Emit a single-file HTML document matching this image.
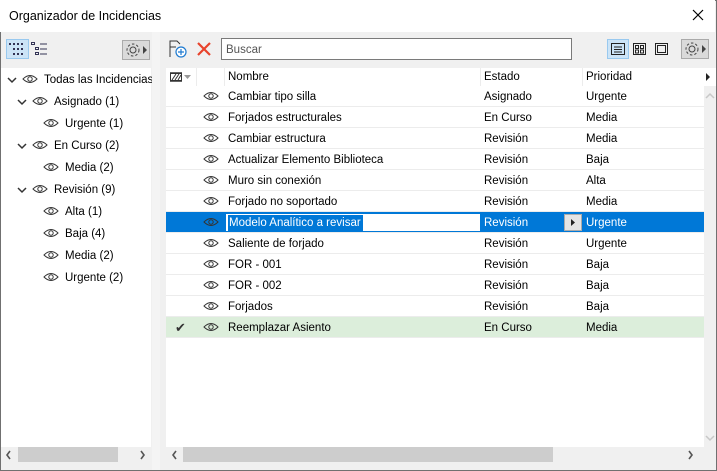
<!DOCTYPE html><html><head><meta charset="utf-8"><style>
*{box-sizing:border-box;margin:0;padding:0}
svg{display:block}
body{width:717px;height:471px;overflow:hidden;font-family:"Liberation Sans",sans-serif;font-size:11.5px;color:#000;background:#f0f0f0;position:relative}
.win{position:absolute;left:0;top:0;width:717px;height:471px;border:1px solid #707070;}
.abs{position:absolute}
.title{left:0;top:0;width:715px;height:32px;background:#fff;}
.title span{position:absolute;left:9px;top:9px;font-size:12.5px}
.tree{left:1px;top:68px;width:150px;height:379px;background:#fff}
.ti{position:absolute;height:22px;line-height:24px;white-space:nowrap}
.tbl{left:166px;top:68px;width:538px;height:379px;background:#fff}
.row{position:absolute;left:0;width:538px;height:21px;border-bottom:1px solid #ececec;line-height:22px}
.row span{position:absolute;top:0}
.eye{position:absolute;width:16px;height:10px}
.sb{background:#cdcdcd}
</style></head><body><div class="win"></div>
<div class="abs title"><span>Organizador de Incidencias</span>
<svg class="abs" style="left:692px;top:9px" width="12" height="12"><path d="M1 1L11 11M11 1L1 11" stroke="#000" stroke-width="1.2"/></svg></div>
<div class="abs" style="left:6px;top:39px;width:23px;height:20px;background:#cce4f7;border:1px solid #99c9ef"></div>
<svg class="abs" style="left:9px;top:43px" width="18" height="12"><g fill="#335"><rect x="0" y="0" width="2" height="2"/><rect x="4" y="0" width="2" height="2"/><rect x="8" y="0" width="2" height="2"/><rect x="12" y="0" width="2" height="2"/><rect x="4" y="5" width="2" height="2"/><rect x="8" y="5" width="2" height="2"/><rect x="12" y="5" width="2" height="2"/><rect x="4" y="10" width="2" height="2"/><rect x="8" y="10" width="2" height="2"/><rect x="12" y="10" width="2" height="2"/></g></svg>
<svg class="abs" style="left:31px;top:42px" width="18" height="14"><g fill="none" stroke="#335"><rect x="0.5" y="0.5" width="3" height="2"/><rect x="4.5" y="5.5" width="3" height="2"/><rect x="4.5" y="10.5" width="3" height="2"/><path d="M9 2h7M9 7h7M9 12h7"/></g></svg>
<div class="abs" style="left:122px;top:40px;width:28px;height:20px;background:#dadada;border:1px solid #aaa"></div>
<svg class="abs" style="left:125px;top:42px" width="24" height="16"><circle cx="8" cy="8" r="3" fill="none" stroke="#444"/><circle cx="8" cy="8" r="6" fill="none" stroke="#444" stroke-dasharray="2.5 2"/><path d="M18 4l4 4-4 4z" fill="#444"/></svg>
<div class="abs tree"></div>
<div id="tree"></div>
<div class="abs" style="left:152px;top:32px;width:8px;height:438px;background:#f4f4f4"></div>
<svg class="abs" style="left:168px;top:39px" width="20" height="20"><path d="M2 18V2h7l3 3" fill="none" stroke="#333"/><path d="M2 8h6" stroke="#333"/><circle cx="13" cy="13" r="5" fill="#fff" stroke="#1e7ad0" stroke-width="1.2"/><path d="M13 10v6M10 13h6" stroke="#1e7ad0" stroke-width="1.2"/></svg>
<svg class="abs" style="left:196px;top:41px" width="16" height="16"><path d="M2 2L14 14M14 2L2 14" stroke="#e8432c" stroke-width="2.2"/></svg>
<div class="abs" style="left:221px;top:38px;width:351px;height:22px;background:#fff;border:1px solid #7a7a7a;padding:5px 4px;color:#555">Buscar</div>
<div class="abs" style="left:607px;top:39px;width:22px;height:20px;background:#cce4f7;border:1px solid #99c9ef"></div>
<svg class="abs" style="left:610px;top:42px" width="70" height="14"><rect x="1.5" y="1.5" width="13" height="11" fill="none" stroke="#222"/><path d="M4 5h8M4 7.5h8M4 10h8" stroke="#222"/><rect x="23.5" y="1.5" width="12" height="11" fill="none" stroke="#222"/><rect x="25.5" y="3.5" width="3" height="3" fill="none" stroke="#222"/><rect x="30.5" y="3.5" width="3" height="3" fill="none" stroke="#222"/><rect x="25.5" y="8" width="3" height="3" fill="none" stroke="#222"/><rect x="30.5" y="8" width="3" height="3" fill="none" stroke="#222"/><rect x="45.5" y="1.5" width="12" height="11" fill="none" stroke="#222"/><rect x="47.5" y="3.5" width="8" height="7" fill="none" stroke="#222"/></svg>
<div class="abs" style="left:681px;top:39px;width:28px;height:20px;background:#dadada;border:1px solid #aaa"></div>
<svg class="abs" style="left:684px;top:41px" width="24" height="16"><circle cx="8" cy="8" r="3" fill="none" stroke="#444"/><circle cx="8" cy="8" r="6" fill="none" stroke="#444" stroke-dasharray="2.5 2"/><path d="M18 4l4 4-4 4z" fill="#444"/></svg>
<div class="abs tbl"><div id="rows"></div></div>
<div class="abs" style="left:704px;top:68px;width:12px;height:18px;background:#fff"></div>
<svg class="abs" style="left:704px;top:72px" width="8" height="10"><path d="M2 1l4 4-4 4z" fill="#222"/></svg>
<svg class="abs" style="left:705px;top:92px" width="10" height="8"><path d="M1 6l4-4 4 4" fill="none" stroke="#c8c8c8" stroke-width="1.5"/></svg>
<svg class="abs" style="left:705px;top:434px" width="10" height="8"><path d="M1 2l4 4 4-4" fill="none" stroke="#c8c8c8" stroke-width="1.5"/></svg>
<div class="abs sb" style="left:18px;top:447px;width:100px;height:15px"></div>
<svg class="abs" style="left:5px;top:450px" width="8" height="10"><path d="M5 1L2 5l3 4" fill="none" stroke="#555" stroke-width="1.6"/></svg>
<svg class="abs" style="left:139px;top:450px" width="8" height="10"><path d="M2 1l3 4-3 4" fill="none" stroke="#555" stroke-width="1.6"/></svg>
<div class="abs sb" style="left:183px;top:447px;width:370px;height:15px"></div>
<svg class="abs" style="left:171px;top:450px" width="8" height="10"><path d="M5 1L2 5l3 4" fill="none" stroke="#555" stroke-width="1.6"/></svg>
<svg class="abs" style="left:687px;top:450px" width="8" height="10"><path d="M2 1l3 4-3 4" fill="none" stroke="#555" stroke-width="1.6"/></svg>
<script>
var eye='<svg width="16" height="10" viewBox="0 0 16 10"><path d="M1 5Q8 -2 15 5Q8 12 1 5Z" fill="none" stroke="#333"/><circle cx="8" cy="5" r="2.2" fill="none" stroke="#333"/></svg>';
var chev='<svg width="10" height="8"><path d="M1 2l4 4 4-4" fill="none" stroke="#333" stroke-width="1.5"/></svg>';
var t=[[0,1,'Todas las Incidencias'],[1,1,'Asignado (1)'],[2,0,'Urgente (1)'],[1,1,'En Curso (2)'],[2,0,'Media (2)'],[1,1,'Revisión (9)'],[2,0,'Alta (1)'],[2,0,'Baja (4)'],[2,0,'Media (2)'],[2,0,'Urgente (2)']];
var h='';t.forEach(function(e,i){var y=68+i*22,x=7+e[0]*10;
if(e[1])h+='<div class="abs" style="left:'+x+'px;top:'+(y+8)+'px">'+chev+'</div>';
var ex=e[0]==2?43:x+15;h+='<div class="abs" style="left:'+ex+'px;top:'+(y+6)+'px">'+eye+'</div><div class="ti" style="left:'+(ex+22)+'px;top:'+y+'px">'+e[2]+'</div>';});
document.getElementById('tree').innerHTML=h;
var r=[['Cambiar tipo silla','Asignado','Urgente'],['Forjados estructurales','En Curso','Media'],['Cambiar estructura','Revisión','Media'],['Actualizar Elemento Biblioteca','Revisión','Baja'],['Muro sin conexión','Revisión','Alta'],['Forjado no soportado','Revisión','Media'],['Modelo Analítico a revisar','Revisión','Urgente'],['Saliente de forjado','Revisión','Urgente'],['FOR - 001','Revisión','Baja'],['FOR - 002','Revisión','Baja'],['Forjados','Revisión','Baja'],['Reemplazar Asiento','En Curso','Media']];
var s='<div class="row" style="top:0;height:18px;line-height:19px;border:none"><svg style="position:absolute;left:4px;top:4px" width="24" height="10"><rect x="0.5" y="1.5" width="11" height="7" fill="#fff" stroke="#333"/><path d="M2 8l4-6M5 8l4-6M8 8l3-5" stroke="#333"/><path d="M0 1h12M0 9h12" stroke="#333" stroke-width="1.5"/><path d="M14 3h7l-3.5 4z" fill="#999"/></svg><div style="position:absolute;left:30px;top:0;width:1px;height:18px;background:#ececec"></div><div style="position:absolute;left:58px;top:0;width:1px;height:18px;background:#ececec"></div><span style="left:62px">Nombre</span><div style="position:absolute;left:314px;top:0;width:1px;height:18px;background:#ececec"></div><span style="left:318px">Estado</span><div style="position:absolute;left:416px;top:0;width:1px;height:18px;background:#ececec"></div><span style="left:420px">Prioridad</span></div>';
r.forEach(function(e,i){var y=18+i*21,sel=i==6,gr=i==11;
var bg=sel?'#0078d7':gr?'#dceedb':'#fff',c=sel?'#fff':'#000';
s+='<div class="row" style="top:'+y+'px;background:'+bg+';color:'+c+'">';
if(gr)s+='<span style="left:9px;font-size:13px;color:#333">✔</span>';
s+='<div class="eye" style="left:37px;top:5px">'+eye+'</div>';
if(sel)s+='<div style="position:absolute;left:60px;top:2px;width:254px;height:17px;background:#fff"></div><span style="left:62px;top:3px;line-height:16px;background:#0078d7;color:#fff;padding:0 2px 0 1px">'+e[0]+'</span><div style="position:absolute;left:398px;top:2px;width:18px;height:17px;background:#e4e4e4;border:1px solid #aaa"></div><svg style="position:absolute;left:404px;top:6px" width="6" height="9"><path d="M1 1l4 3.5-4 3.5z" fill="#222"/></svg>';
else s+='<span style="left:62px">'+e[0]+'</span>';
s+='<span style="left:318px">'+e[1]+'</span><span style="left:420px">'+e[2]+'</span></div>';});
document.getElementById('rows').innerHTML=s;
</script>
</body></html>
